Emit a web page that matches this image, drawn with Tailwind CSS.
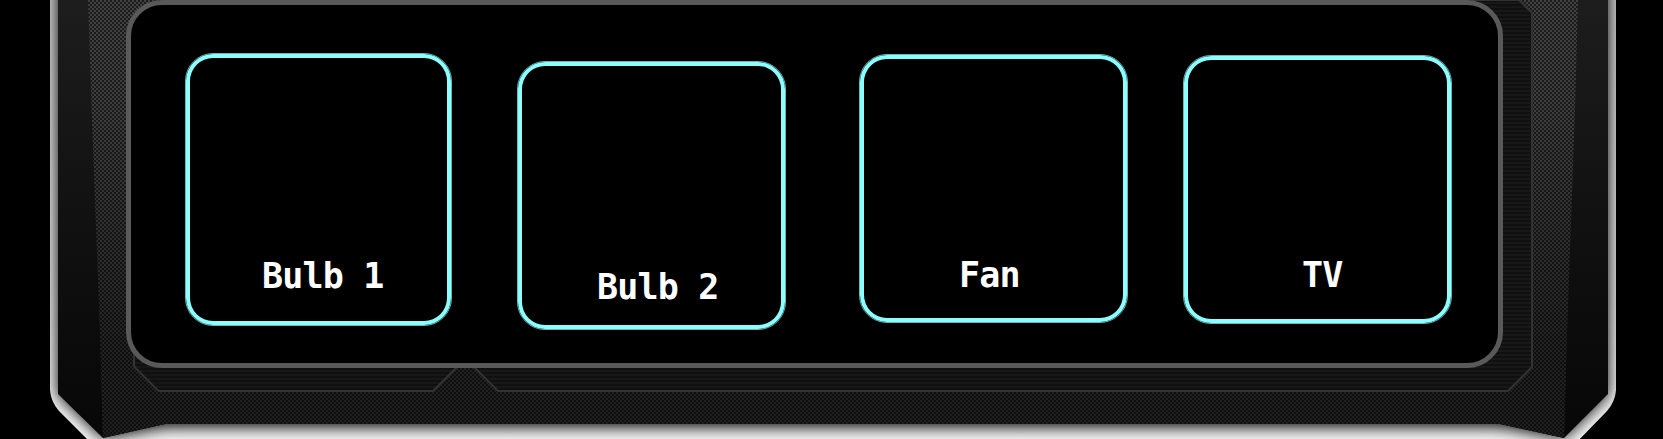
<!DOCTYPE html>
<html lang="en">
<head>
<meta charset="utf-8">
<title>Device panel</title>
<script src="https://cdn.jsdelivr.net/npm/@tailwindcss/browser@4"></script>
</head>
<body class="bg-black">
<div class="relative w-[1663px] h-[439px] overflow-hidden bg-black">
  <svg class="absolute inset-0" width="1663" height="439" viewBox="0 0 1663 439" aria-hidden="true">
    <defs>
      <linearGradient id="metal" gradientUnits="userSpaceOnUse" x1="0" y1="0" x2="0" y2="439"><stop offset="0" stop-color="#cecece"/><stop offset=".7" stop-color="#e2e2e2"/><stop offset="1" stop-color="#f6f6f6"/></linearGradient>
      <linearGradient id="side" x1="0" y1="0" x2="0" y2="1"><stop offset="0" stop-color="#1d1d1d"/><stop offset=".5" stop-color="#111"/><stop offset="1" stop-color="#070707"/></linearGradient>
      <linearGradient id="shade" x1="0" y1="0" x2="0" y2="1"><stop offset="0" stop-color="#000" stop-opacity="0"/><stop offset=".25" stop-color="#000" stop-opacity=".06"/><stop offset=".8" stop-color="#000" stop-opacity=".48"/><stop offset="1" stop-color="#000" stop-opacity=".52"/></linearGradient>
      <pattern id="mesh" width="4" height="4" patternUnits="userSpaceOnUse"><rect width="4" height="4" fill="#1c1c1c"/><path d="M0 0h2v2H0zM2 2h2v2H2z" fill="#414141"/></pattern>
      <pattern id="lines" width="4" height="4" patternUnits="userSpaceOnUse"><rect width="4" height="4" fill="#181818"/><rect width="4" height="2" fill="#101010"/></pattern>
      <filter id="soft" filterUnits="userSpaceOnUse" x="0" y="-80" width="1663" height="580"><feGaussianBlur stdDeviation="8"/></filter>
      <clipPath id="outer"><path d="M50-5V390Q51 402 59 411L94 446H1573L1607 411Q1615 402 1616 390V-5Z"/></clipPath>
    </defs>
    <g clip-path="url(#outer)">
      <rect x="50" y="-5" width="1566" height="450" fill="url(#metal)"/>
      <path d="M58-60V394L103 438L165 427H1500L1564 438L1608 394V-60Z" fill="#000" filter="url(#soft)"/>
    </g>
    <path d="M58 0V394L103 438L165 424H1500L1564 438L1608 394V0Z" fill="url(#side)"/>
    <path d="M88 0L91.6 110L100 330L103 438L165 424H1500L1564 438L1567 330L1575 110L1578 0Z" fill="url(#mesh)"/>
    <path d="M88 0L91.6 110L100 330L103 438L165 424H1500L1564 438L1567 330L1575 110L1578 0Z" fill="url(#shade)"/>
    <path d="M134 340V366.5L158.500 391H433L456 368L456 340Z M475 340V368L498 391H1508L1532 367V13L1519 0H1400V340Z" fill="url(#lines)" stroke="#323232" stroke-width="2"/>
  </svg>
  <main class="relative ml-[126px] w-[1377px] h-[368px] rounded-[36px] border-[5px] border-[#595959] bg-black flex items-start pl-[54px] font-['DejaVu_Sans_Mono',monospace] font-bold text-[35px] leading-[40px] tracking-[-0.8px] text-white">
    <section class="mt-[48px] w-[267px] h-[273px] shrink-0 rounded-[28px] border border-[#66b8b8] inset-ring-4 inset-ring-[#8cffff] flex items-end pl-[76px] pb-[29px] whitespace-nowrap">Bulb 1</section>
    <section class="ml-[65px] mt-[56px] w-[269px] h-[269px] shrink-0 rounded-[28px] border border-[#66b8b8] inset-ring-4 inset-ring-[#8cffff] flex items-end pl-[79px] pb-[22px] whitespace-nowrap">Bulb 2</section>
    <section class="ml-[73px] mt-[49px] w-[269px] h-[269px] shrink-0 rounded-[28px] border border-[#66b8b8] inset-ring-4 inset-ring-[#8cffff] flex items-end pl-[99px] pb-[27px] whitespace-nowrap">Fan</section>
    <section class="ml-[55px] mt-[50px] w-[269px] h-[269px] shrink-0 rounded-[28px] border border-[#66b8b8] inset-ring-4 inset-ring-[#8cffff] flex items-end pl-[118px] pb-[28px] whitespace-nowrap">TV</section>
  </main>
</div>
</body>
</html>
